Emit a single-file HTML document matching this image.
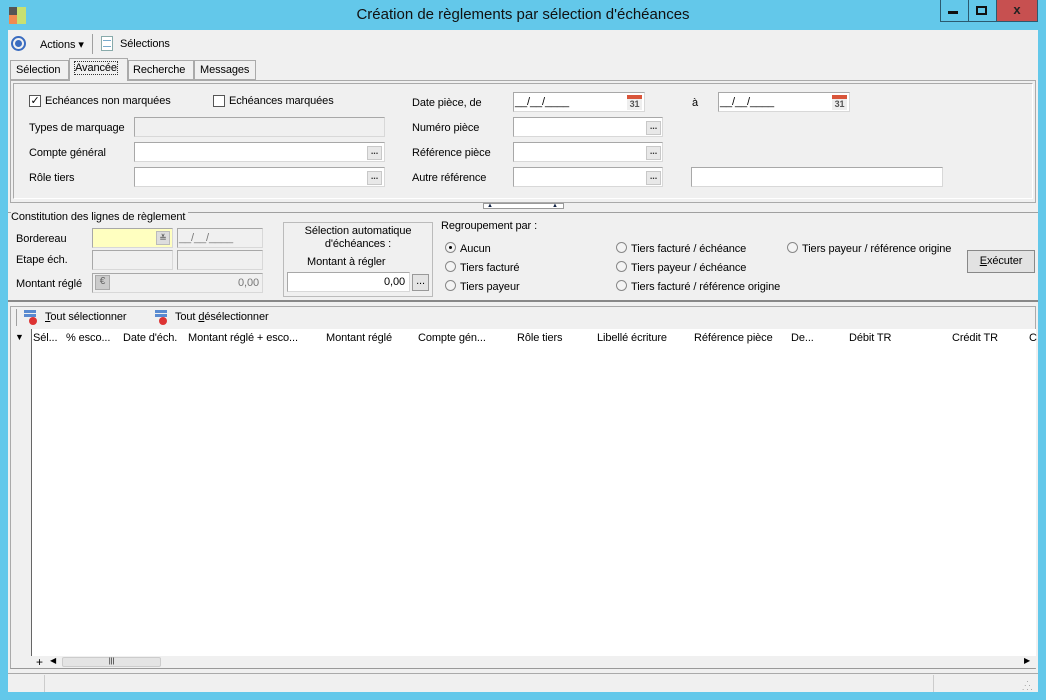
<!DOCTYPE html>
<html><head><meta charset="utf-8"><style>
*{box-sizing:border-box;margin:0;padding:0}
body{width:1046px;height:700px;background:#63c8ea;font-family:"Liberation Sans",sans-serif;font-size:11px;color:#000;position:relative;overflow:hidden;letter-spacing:-0.1px}
.a{position:absolute;white-space:nowrap}
.in{position:absolute;background:#fff;border:1px solid #d8d8d8;border-top-color:#a8a8a8;border-left-color:#a8a8a8}
.dis{background:#f0f0f0}
.dots{position:absolute;width:15px;height:14px;background:#e8e8e8;border:1px solid #c8c8c8;font-size:9px;line-height:8px;text-align:center;color:#333;font-weight:bold}
.cal{position:absolute;width:15px;height:15px;background:#eee;border-top:4px solid #d9553a;font-size:9px;font-weight:bold;color:#555;text-align:center;line-height:11px}
.rb{position:absolute;width:11px;height:11px;border:1px solid #888;border-radius:50%;background:#f4f4f4}
.cb{position:absolute;width:12px;height:12px;border:1px solid #555;background:#fff;font-size:11px;line-height:10px;text-align:center}
.l{position:absolute;background:#a0a0a0}
</style></head><body>
<div class="a" style="left:9px;top:7px;width:8px;height:8px;background:#555"></div>
<div class="a" style="left:9px;top:15px;width:8px;height:9px;background:#f08a50"></div>
<div class="a" style="left:17px;top:7px;width:9px;height:17px;background:#c8e070"></div>
<div class="a" style="left:0;width:1046px;top:6px;text-align:center;font-size:15px;color:#111;letter-spacing:0">Création de règlements par sélection d'échéances</div>
<div class="a" style="left:940px;top:0;width:57px;height:22px;border:1px solid #2b5a70;border-top:none"></div>
<div class="a" style="left:968px;top:0;width:1px;height:22px;background:#2b5a70"></div>
<div class="a" style="left:948px;top:11px;width:10px;height:3px;background:#111"></div>
<div class="a" style="left:976px;top:6px;width:11px;height:9px;border:2px solid #111"></div>
<div class="a" style="left:996px;top:0;width:42px;height:22px;background:#c75050;border:1px solid #2b5a70;border-top:none;color:#222;font-weight:bold;text-align:center;font-size:13px;line-height:20px">x</div>
<div class="a" style="left:8px;top:30px;width:1030px;height:662px;background:#f0f0f0"></div>
<div class="a" style="left:11px;top:36px;width:15px;height:15px;border:2px solid #3a6cc0;border-radius:50%"></div>
<div class="a" style="left:15px;top:40px;width:7px;height:7px;background:#3a6cc0;border-radius:50%"></div>
<div class="a" style="left:40px;top:38px">Actions ▾</div>
<div class="l" style="left:92px;top:34px;width:1px;height:20px"></div>
<div class="a" style="left:101px;top:36px;width:12px;height:15px;background:#fff;border:1px solid #8aa;"></div>
<div class="a" style="left:103px;top:40px;width:8px;height:7px;border-top:1px solid #7ac;border-bottom:1px solid #7ac"></div>
<div class="a" style="left:120px;top:38px">Sélections</div>
<div class="a" style="left:10px;top:60px;width:59px;height:20px;border:1px solid #aaa;padding:3px 5px">Sélection</div>
<div class="a" style="left:69px;top:58px;width:59px;height:23px;border:1px solid #aaa;border-bottom:none;background:#f0f0f0;padding:3px 5px;z-index:2"><span style="outline:1px dotted #333">Avancée</span></div>
<div class="a" style="left:128px;top:60px;width:66px;height:20px;border:1px solid #aaa;padding:3px 4px">Recherche</div>
<div class="a" style="left:194px;top:60px;width:62px;height:20px;border:1px solid #aaa;padding:3px 5px">Messages</div>
<div class="a" style="left:10px;top:80px;width:1026px;height:123px;border:1px solid #aaa"></div>
<div class="a" style="left:13px;top:83px;width:1020px;height:116px;border:1px solid #aaa;border-right-color:#fff;border-bottom-color:#fff"></div>
<div class="cb" style="left:29px;top:95px">✓</div><div class="a" style="left:45px;top:95px">Echéances non marquées</div>
<div class="cb" style="left:213px;top:95px"></div><div class="a" style="left:229px;top:95px">Echéances marquées</div>
<div class="a" style="left:29px;top:122px">Types de marquage</div>
<div class="a" style="left:29px;top:147px">Compte général</div>
<div class="a" style="left:29px;top:172px">Rôle tiers</div>
<div class="in dis" style="left:134px;top:117px;width:251px;height:20px"></div>
<div class="in" style="left:134px;top:142px;width:251px;height:20px"></div><div class="dots" style="left:367px;top:146px">...</div>
<div class="in" style="left:134px;top:167px;width:251px;height:20px"></div><div class="dots" style="left:367px;top:171px">...</div>
<div class="a" style="left:412px;top:97px">Date pièce, de</div>
<div class="a" style="left:412px;top:122px">Numéro pièce</div>
<div class="a" style="left:412px;top:147px">Référence pièce</div>
<div class="a" style="left:412px;top:172px">Autre référence</div>
<div class="in" style="left:513px;top:92px;width:132px;height:20px;padding:3px 1px">__/__/____</div><div class="cal" style="left:627px;top:95px">31</div>
<div class="a" style="left:692px;top:97px">à</div>
<div class="in" style="left:718px;top:92px;width:132px;height:20px;padding:3px 1px">__/__/____</div><div class="cal" style="left:832px;top:95px">31</div>
<div class="in" style="left:513px;top:117px;width:150px;height:20px"></div><div class="dots" style="left:646px;top:121px">...</div>
<div class="in" style="left:513px;top:142px;width:150px;height:20px"></div><div class="dots" style="left:646px;top:146px">...</div>
<div class="in" style="left:513px;top:167px;width:150px;height:20px"></div><div class="dots" style="left:646px;top:171px">...</div>
<div class="in" style="left:691px;top:167px;width:252px;height:20px"></div>
<div class="a" style="left:483px;top:203px;width:81px;height:6px;border:1px solid #999;background:#fff;font-size:6px;line-height:4px;color:#124;z-index:3"><span style="position:absolute;left:3px">▲</span><span style="position:absolute;left:68px">▲</span></div>
<div class="l" style="left:8px;top:212px;width:1030px;height:1px"></div>
<div class="a" style="left:11px;top:211px;background:#f0f0f0;padding-right:3px">Constitution des lignes de règlement</div>
<div class="a" style="left:16px;top:233px">Bordereau</div>
<div class="a" style="left:16px;top:254px">Etape éch.</div>
<div class="a" style="left:16px;top:278px">Montant réglé</div>
<div class="in" style="left:92px;top:228px;width:81px;height:20px;background:#ffffc0"></div>
<div class="a" style="left:156px;top:231px;width:14px;height:14px;background:#ddd;border:1px solid #bbb;font-size:9px;text-align:center;line-height:12px;color:#444">≚</div>
<div class="in dis" style="left:177px;top:228px;width:86px;height:20px;padding:3px 1px;color:#777">__/__/____</div>
<div class="in dis" style="left:92px;top:250px;width:81px;height:20px"></div>
<div class="in dis" style="left:177px;top:250px;width:86px;height:20px"></div>
<div class="in dis" style="left:92px;top:273px;width:171px;height:20px;color:#777;text-align:right;padding:3px 3px">0,00</div>
<div class="a" style="left:95px;top:275px;width:15px;height:15px;background:#ccc;border:1px solid #aaa;font-size:10px;text-align:center;color:#666">€</div>
<div class="a" style="left:283px;top:222px;width:150px;height:75px;border:1px solid #bbb"></div>
<div class="a" style="left:283px;top:225px;width:150px;text-align:center;white-space:normal;line-height:13px">Sélection automatique d'échéances :</div>
<div class="a" style="left:307px;top:256px">Montant à régler</div>
<div class="in" style="left:287px;top:272px;width:123px;height:20px;text-align:right;padding:3px 4px">0,00</div>
<div class="a" style="left:412px;top:274px;width:17px;height:17px;background:#e4e4e4;border:1px solid #999;text-align:center;line-height:12px">...</div>
<div class="a" style="left:441px;top:220px">Regroupement par :</div>
<div class="rb" style="left:445px;top:242px"><div style="width:3px;height:3px;background:#000;border-radius:50%;margin:3px"></div></div><div class="a" style="left:460px;top:243px">Aucun</div>
<div class="rb" style="left:445px;top:261px"></div><div class="a" style="left:460px;top:262px">Tiers facturé</div>
<div class="rb" style="left:445px;top:280px"></div><div class="a" style="left:460px;top:281px">Tiers payeur</div>
<div class="rb" style="left:616px;top:242px"></div><div class="a" style="left:631px;top:243px">Tiers facturé / échéance</div>
<div class="rb" style="left:616px;top:261px"></div><div class="a" style="left:631px;top:262px">Tiers payeur / échéance</div>
<div class="rb" style="left:616px;top:280px"></div><div class="a" style="left:631px;top:281px">Tiers facturé / référence origine</div>
<div class="rb" style="left:787px;top:242px"></div><div class="a" style="left:802px;top:243px">Tiers payeur / référence origine</div>
<div class="a" style="left:967px;top:250px;width:68px;height:23px;background:#e2e2e2;border:1px solid #888;text-align:center;line-height:21px"><u>E</u>xécuter</div>
<div class="a" style="left:8px;top:300px;width:1030px;height:2px;background:#888"></div>
<div class="a" style="left:10px;top:306px;width:1026px;height:363px;border:1px solid #aaa;border-bottom-color:#999"></div>
<div class="l" style="left:16px;top:309px;width:1px;height:17px"></div>
<div class="a" style="left:24px;top:310px;width:12px;height:3px;background:#5a8ad0"></div><div class="a" style="left:24px;top:314px;width:12px;height:3px;background:#5a8ad0"></div><div class="a" style="left:29px;top:317px;width:8px;height:8px;background:#d33;border-radius:50%"></div>
<div class="a" style="left:45px;top:311px"><u>T</u>out sélectionner</div>
<div class="a" style="left:155px;top:310px;width:12px;height:3px;background:#5a8ad0"></div><div class="a" style="left:155px;top:314px;width:12px;height:3px;background:#5a8ad0"></div><div class="a" style="left:159px;top:317px;width:8px;height:8px;background:#d33;border-radius:50%"></div>
<div class="a" style="left:175px;top:311px">Tout <u>d</u>ésélectionner</div>
<div class="a" style="left:32px;top:329px;width:1004px;height:327px;background:#fff"></div>
<div class="l" style="left:31px;top:329px;width:1px;height:327px;background:#666"></div>
<div class="a" style="left:15px;top:332px;font-size:9px">▼</div>
<div class="a" style="left:33px;top:332px">Sél...</div>
<div class="a" style="left:66px;top:332px">% esco...</div>
<div class="a" style="left:123px;top:332px">Date d'éch.</div>
<div class="a" style="left:188px;top:332px">Montant réglé + esco...</div>
<div class="a" style="left:326px;top:332px">Montant réglé</div>
<div class="a" style="left:418px;top:332px">Compte gén...</div>
<div class="a" style="left:517px;top:332px">Rôle tiers</div>
<div class="a" style="left:597px;top:332px">Libellé écriture</div>
<div class="a" style="left:694px;top:332px">Référence pièce</div>
<div class="a" style="left:791px;top:332px">De...</div>
<div class="a" style="left:849px;top:332px">Débit TR</div>
<div class="a" style="left:952px;top:332px">Crédit TR</div>
<div class="a" style="left:1029px;top:332px">C</div>
<div class="a" style="left:32px;top:656px;width:1004px;height:12px;background:#f0f0f0"></div>
<div class="a" style="left:36px;top:655px;font-size:12px">+</div>
<div class="a" style="left:50px;top:656px;font-size:8px">◀</div>
<div class="a" style="left:62px;top:657px;width:99px;height:10px;background:#e4e4e4;border:1px solid #ccc;border-radius:2px;font-size:7px;text-align:center;line-height:8px">|||</div>
<div class="a" style="left:1024px;top:656px;font-size:8px">▶</div>
<div class="l" style="left:8px;top:673px;width:1030px;height:1px;background:#aaa"></div>
<div class="l" style="left:44px;top:675px;width:1px;height:17px;background:#ccc"></div>
<div class="l" style="left:933px;top:675px;width:1px;height:17px;background:#ccc"></div>
<div class="a" style="left:1022px;top:678px;font-size:8px;color:#888;line-height:4px">&nbsp;&nbsp;.<br>&nbsp;.&nbsp;.<br>.&nbsp;.&nbsp;.</div>
</body></html>
